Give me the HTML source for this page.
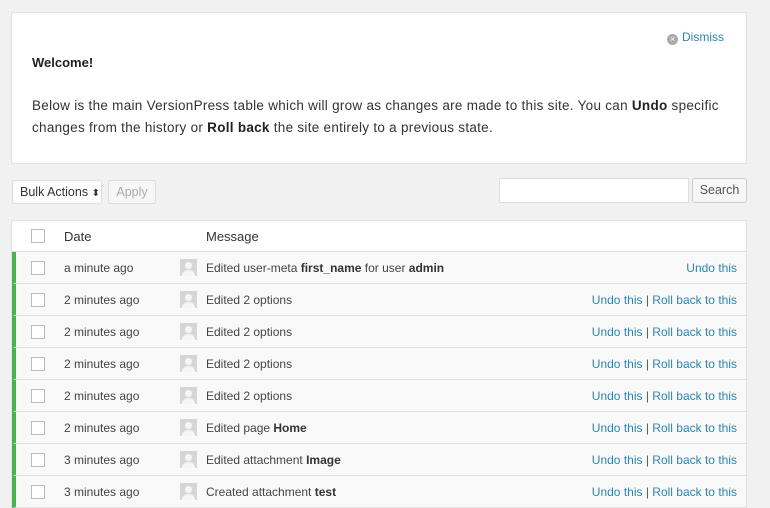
<!DOCTYPE html>
<html><head><style>
*{box-sizing:border-box;margin:0;padding:0}
body{width:770px;height:505px;background:#f1f1f1;font-family:"Liberation Sans",sans-serif;color:#444;position:relative;overflow:hidden;font-size:12px}
.notice{position:absolute;left:11px;top:12px;width:736px;height:152px;background:#fff;border:1px solid #e2e2e2}
.notice h3{position:absolute;left:20px;top:42px;font-size:13px;color:#222}
.notice p{position:absolute;left:20px;top:82px;font-size:13.5px;letter-spacing:0.28px;line-height:22px;color:#333;white-space:nowrap}
.notice b{color:#222}
.dismiss{position:absolute;right:22px;top:17px;color:#2a85b8;font-size:12px}
.dismiss i{display:inline-block;width:11px;height:11px;border-radius:50%;background:#aaa;color:#fff;font-size:9px;line-height:11px;text-align:center;font-style:normal;margin-right:4px;vertical-align:-1px}
.sel{position:absolute;left:12px;top:180px;width:90px;height:24px;background:#fff;border:1px solid #ddd;border-radius:3px;font-size:12.5px;line-height:22px;padding-left:7px;color:#333;white-space:nowrap}
.sel span{font-size:10px}
.apply{position:absolute;left:108px;top:180px;width:48px;height:24px;border:1px solid #ddd;border-radius:3px;background:#f7f7f7;color:#aaa;font-size:12.5px;line-height:22px;text-align:center}
.search{position:absolute;left:499px;top:178px;width:190px;height:25px;background:#fff;border:1px solid #ddd}
.sbtn{position:absolute;left:692px;top:178px;width:55px;height:25px;border:1px solid #ccc;border-radius:3px;background:#f7f7f7;color:#555;font-size:12.5px;line-height:23px;text-align:center}
.tbl{position:absolute;left:11px;top:220px;width:736px;background:#fff;border:1px solid #e2e2e2;border-bottom:none}
.row{height:32px;position:relative;border-bottom:1px solid #e1e1e1;background:#f9f9f9}
.row.h{height:31px;background:#fff;font-size:13px;color:#333}
.row.g{border-left:4px solid #46b450}
.cb{position:absolute;left:19px;top:9px;width:14px;height:14px;border:1px solid #bbb;background:#fff}
.row.g .cb{left:15px}
.d{position:absolute;left:52px;top:9px;color:#444}
.row.g .d{left:48px}
.av{position:absolute;left:164px;top:7px;width:17px;height:17px;background:#d6d6d6;overflow:hidden}
.av:before{content:"";position:absolute;left:5px;top:3px;width:7px;height:7px;border-radius:50%;background:#f5f5f5}
.av:after{content:"";position:absolute;left:2px;top:11px;width:13px;height:10px;border-radius:50% 50% 0 0;background:#f5f5f5}
.m{position:absolute;left:194px;top:9px}
.row.g .m{left:190px}
.m b{color:#333}
.a{position:absolute;right:9px;top:9px;color:#2a85b8}
.a span{color:#555}
</style></head><body>
<div class="notice">
<div class="dismiss"><i>×</i>Dismiss</div>
<h3>Welcome!</h3>
<p>Below is the main VersionPress table which will grow as changes are made to this site. You can <b>Undo</b> specific<br>changes from the history or <b>Roll back</b> the site entirely to a previous state.</p>
</div>
<div class="sel">Bulk Actions <span>⬍</span></div>
<div class="apply">Apply</div>
<div class="search"></div>
<div class="sbtn">Search</div>
<div class="tbl">
<div class="row h"><div class="cb" style="top:8px"></div><div class="d" style="top:8px;color:#333">Date</div><div class="m" style="top:8px">Message</div></div>
<div class="row g"><div class="cb"></div><div class="d">a minute ago</div><div class="av"></div><div class="m">Edited user-meta <b>first_name</b> for user <b>admin</b></div><div class="a">Undo this</div></div>
<div class="row g"><div class="cb"></div><div class="d">2 minutes ago</div><div class="av"></div><div class="m">Edited 2 options</div><div class="a">Undo this <span>|</span> Roll back to this</div></div>
<div class="row g"><div class="cb"></div><div class="d">2 minutes ago</div><div class="av"></div><div class="m">Edited 2 options</div><div class="a">Undo this <span>|</span> Roll back to this</div></div>
<div class="row g"><div class="cb"></div><div class="d">2 minutes ago</div><div class="av"></div><div class="m">Edited 2 options</div><div class="a">Undo this <span>|</span> Roll back to this</div></div>
<div class="row g"><div class="cb"></div><div class="d">2 minutes ago</div><div class="av"></div><div class="m">Edited 2 options</div><div class="a">Undo this <span>|</span> Roll back to this</div></div>
<div class="row g"><div class="cb"></div><div class="d">2 minutes ago</div><div class="av"></div><div class="m">Edited page <b>Home</b></div><div class="a">Undo this <span>|</span> Roll back to this</div></div>
<div class="row g"><div class="cb"></div><div class="d">3 minutes ago</div><div class="av"></div><div class="m">Edited attachment <b>Image</b></div><div class="a">Undo this <span>|</span> Roll back to this</div></div>
<div class="row g"><div class="cb"></div><div class="d">3 minutes ago</div><div class="av"></div><div class="m">Created attachment <b>test</b></div><div class="a">Undo this <span>|</span> Roll back to this</div></div>
</div>
</body></html>
